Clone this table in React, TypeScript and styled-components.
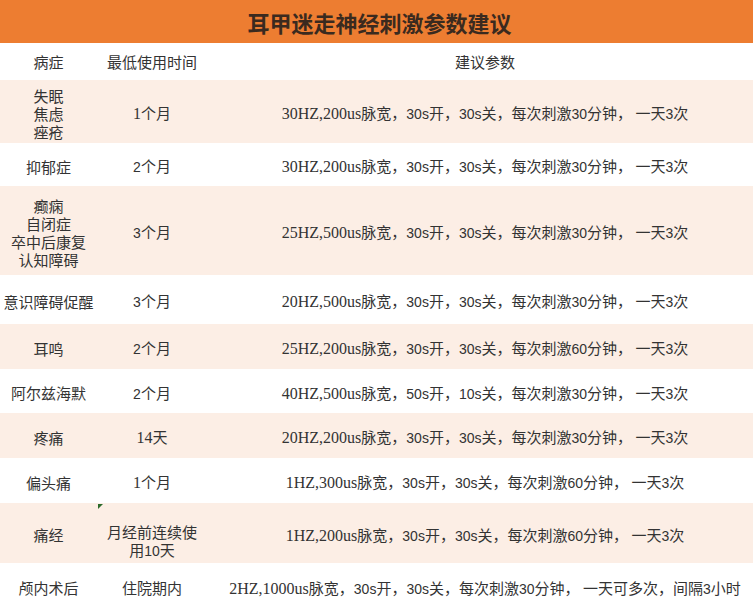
import React from "react"
import styled, { createGlobalStyle } from "styled-components"

const GlobalStyle = createGlobalStyle`
    html, body {
        margin: 0;
        padding: 0;
        background: #fff;
    }
    body {
        width: 753px;
        height: 602px;
        overflow: hidden;
    }
`

interface RowI {
    disease: string[]
    time: string[]
    timeSerif?: boolean
    timeShift?: number
    spec: string
    rest: string
    h: number
    marker?: boolean
}

const rows: RowI[] = [
    { disease: ["失眠", "焦虑", "痤疮"], time: ["1个月"], timeSerif: true, spec: "30HZ,200us", rest: "脉宽，30s开，30s关，每次刺激30分钟， 一天3次", h: 63 },
    { disease: ["抑郁症"], time: ["2个月"], spec: "30HZ,200us", rest: "脉宽，30s开，30s关，每次刺激30分钟， 一天3次", h: 43 },
    { disease: ["癫痫", "自闭症", "卒中后康复", "认知障碍"], time: ["3个月"], spec: "25HZ,500us", rest: "脉宽，30s开，30s关，每次刺激30分钟， 一天3次", h: 89 },
    { disease: ["意识障碍促醒"], time: ["3个月"], spec: "20HZ,500us", rest: "脉宽，30s开，30s关，每次刺激30分钟， 一天3次", h: 49 },
    { disease: ["耳鸣"], time: ["2个月"], spec: "25HZ,200us", rest: "脉宽，30s开，30s关，每次刺激60分钟， 一天3次", h: 45 },
    { disease: ["阿尔兹海默"], time: ["2个月"], spec: "40HZ,500us", rest: "脉宽，50s开，10s关，每次刺激30分钟， 一天3次", h: 44 },
    { disease: ["疼痛"], time: ["14天"], timeSerif: true, spec: "20HZ,200us", rest: "脉宽，30s开，30s关，每次刺激30分钟， 一天3次", h: 45 },
    { disease: ["偏头痛"], time: ["1个月"], timeSerif: true, spec: "1HZ,300us", rest: "脉宽，30s开，30s关，每次刺激60分钟， 一天3次", h: 45 },
    { disease: ["痛经"], time: ["月经前连续使", "用10天"], timeShift: 16, spec: "1HZ,200us", rest: "脉宽，30s开，30s关，每次刺激60分钟， 一天3次", h: 60, marker: true },
    { disease: ["颅内术后"], time: ["住院期内"], spec: "2HZ,1000us", rest: "脉宽，30s开，30s关，每次刺激30分钟， 一天可多次，间隔3小时", h: 46 },
]

// latin runs are narrower than the CJK text around them
const mixed = (text: string, serif?: boolean) =>
    text.split(/([0-9A-Za-z]+)/).map((part, i) =>
        /^[0-9A-Za-z]+$/.test(part)
            ? serif ? <Serif key={i}>{part}</Serif> : <Latin key={i}>{part}</Latin>
            : <React.Fragment key={i}>{part}</React.Fragment>
    )

export default function App() {
    return (
        <Page>
            <GlobalStyle />
            <TitleBar>耳甲迷走神经刺激参数建议</TitleBar>
            <Row $h={37}>
                <Cell>病症</Cell>
                <Cell>最低使用时间</Cell>
                <ParamCell>建议参数</ParamCell>
            </Row>
            {rows.map((r, i) => (
                <Row key={i} $h={r.h} $tint={i % 2 === 0}>
                    <Cell $shift={4}>
                        {r.disease.map((d) => <Line key={d}>{d}</Line>)}
                    </Cell>
                    <Cell $shift={r.timeShift ?? 4}>
                        {r.marker && <Marker />}
                        {r.time.map((t) => <Line key={t}>{mixed(t, r.timeSerif)}</Line>)}
                    </Cell>
                    <ParamCell $shift={4}>
                        <Line>
                            <Serif>{r.spec}</Serif>
                            {mixed(r.rest)}
                        </Line>
                    </ParamCell>
                </Row>
            ))}
        </Page>
    )
}

const Page = styled.div`
    width: 753px;
    height: 602px;
    overflow: hidden;
    font-family: "Noto Sans CJK SC", sans-serif;
    color: #333;
`

const TitleBar = styled.div`
    height: 43px;
    background: #ED7D31;
    display: flex;
    align-items: center;
    justify-content: center;
    font-size: 22px;
    font-weight: 700;
    color: #3a2a1f;
    padding-left: 6px;
`

const Row = styled.div<{ $h: number, $tint?: boolean }>`
    display: grid;
    grid-template-columns: 97px 110px 1fr;
    height: ${props => props.$h}px;
    flex-shrink: 0;
    background: ${props => props.$tint ? "#FCEEE5" : "#fff"};
`

const Cell = styled.div<{ $shift?: number }>`
    position: relative;
    display: flex;
    flex-direction: column;
    align-items: center;
    justify-content: center;
    text-align: center;
    font-size: 15px;
    line-height: 18px;
    padding-top: ${props => props.$shift || 0}px;
    box-sizing: border-box;
`

const ParamCell = styled(Cell)`
    padding-left: 10px;
    white-space: nowrap;
`

const Line = styled.div`
    white-space: nowrap;
`

const Serif = styled.span`
    font-family: "Liberation Serif", "Noto Sans CJK SC", serif;
    font-size: 16px;
`

const Latin = styled.span`
    font-family: "Liberation Sans", Arial, sans-serif;
    font-size: 14px;
`

const Marker = styled.span`
    position: absolute;
    top: 1px;
    left: 1px;
    width: 0;
    height: 0;
    border-top: 5px solid #2c6b2c;
    border-right: 5px solid transparent;
`
